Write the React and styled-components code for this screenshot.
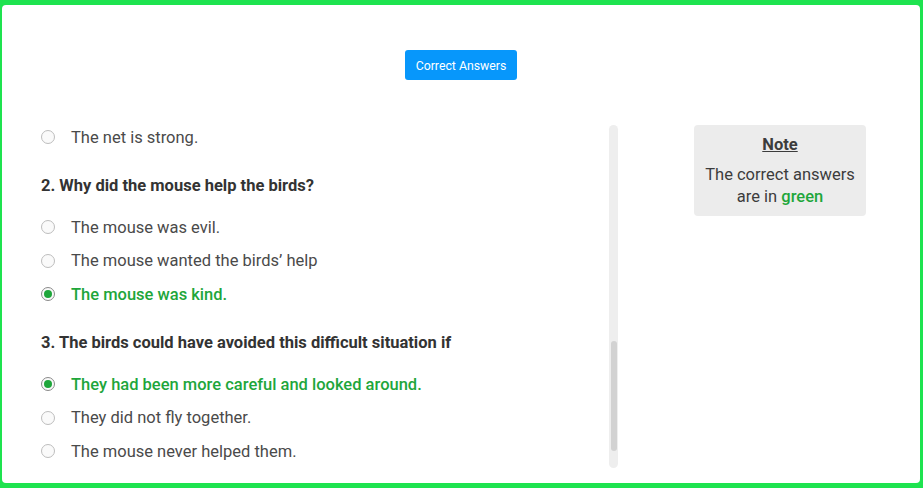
import React from "react";
import styled, { createGlobalStyle } from "styled-components";

const Global = createGlobalStyle`
  html, body { margin: 0; padding: 0; }
  body {
    background: #1ee34f;
    font-family: Roboto, "Liberation Sans", Arial, sans-serif;
  }
`;

const Frame = styled.div`
  width: 923px;
  height: 488px;
  box-sizing: border-box;
  padding: 5px 3px 5px 2px;
  background: #1ee34f;
`;

const Card = styled.div`
  height: 100%;
  background: #fff;
  border-radius: 4px;
  display: flex;
  flex-direction: column;
  align-items: stretch;
  box-sizing: border-box;
  padding-top: 45px;
  padding-bottom: 15px;
`;

const Toolbar = styled.div`
  display: flex;
  justify-content: center;
`;

const Button = styled.button`
  height: 30px;
  width: 112px;
  border: none;
  border-radius: 3px;
  background: #0797fb;
  color: #fff;
  font-family: Roboto, "Liberation Sans", Arial, sans-serif;
  font-size: 12.3px;
  padding: 1px 0 0;
  cursor: pointer;
`;

const Main = styled.div`
  margin-top: 45px;
  flex: 1;
  display: flex;
  padding: 0 54px 0 39px;
  min-height: 0;
`;

const LeftPane = styled.div`
  width: 577px;
  display: flex;
  height: 100%;
`;

const List = styled.div`
  flex: 1;
  overflow: hidden;
`;

const ListInner = styled.div`
  margin-top: -4.75px;
`;

const Track = styled.div`
  width: 9px;
  height: 100%;
  background: #eeeeee;
  border-radius: 5px;
  display: flex;
  flex-direction: column;
  align-items: center;
  padding-top: 216px;
  box-sizing: border-box;
`;

const Thumb = styled.div`
  width: 6px;
  height: 110px;
  border-radius: 3px;
  background: #d2d2d2;
`;

const Question = styled.div`
  font-size: 16.5px;
  font-weight: 700;
  line-height: 20px;
  color: #333;
  margin: 22.25px 0 14.25px;
`;

const Option = styled.div`
  display: flex;
  align-items: center;
  height: 33.5px;
  font-size: 16.5px;
  color: ${(p) => (p.$correct ? "#1ea63b" : "#4a4a4a")};
  font-weight: ${(p) => (p.$correct ? 500 : 400)};
`;

const Radio = styled.span`
  width: 14px;
  height: 14px;
  box-sizing: border-box;
  border-radius: 50%;
  border: 1px solid ${(p) => (p.$checked ? "#8a8a8a" : "#bdbdbd")};
  background: #fafafa;
  display: flex;
  align-items: center;
  justify-content: center;
  margin-right: 16px;
  flex-shrink: 0;
  &::after {
    content: "";
    width: 8px;
    height: 8px;
    border-radius: 50%;
    background: #1ea63b;
    display: ${(p) => (p.$checked ? "block" : "none")};
  }
`;

const Side = styled.div`
  margin-left: auto;
  width: 172px;
`;

const Note = styled.div`
  background: #ececec;
  border-radius: 4px;
  text-align: center;
  padding: 9px 4px 8px;
  color: #3c3c3c;
  font-size: 16.5px;
  line-height: 22px;
`;

const NoteTitle = styled.div`
  font-weight: 700;
  text-decoration: underline;
  margin-bottom: 8px;
`;

const Green = styled.span`
  color: #1ea63b;
  font-weight: 500;
`;

const questions = [
  {
    title: null,
    options: [{ text: "The net is strong." }],
  },
  {
    title: "2. Why did the mouse help the birds?",
    options: [
      { text: "The mouse was evil." },
      { text: "The mouse wanted the birds’ help" },
      { text: "The mouse was kind.", correct: true },
    ],
  },
  {
    title: "3. The birds could have avoided this difficult situation if",
    options: [
      { text: "They had been more careful and looked around.", correct: true },
      { text: "They did not fly together." },
      { text: "The mouse never helped them." },
    ],
  },
];

export default function App() {
  return (
    <>
      <Global />
      <Frame>
        <Card>
          <Toolbar>
            <Button>Correct Answers</Button>
          </Toolbar>
          <Main>
            <LeftPane>
              <List>
                <ListInner>
                  {questions.map((q, i) => (
                    <div key={i}>
                      {q.title && <Question>{q.title}</Question>}
                      {q.options.map((o, j) => (
                        <Option key={j} $correct={o.correct}>
                          <Radio $checked={o.correct} />
                          {o.text}
                        </Option>
                      ))}
                    </div>
                  ))}
                </ListInner>
              </List>
              <Track>
                <Thumb />
              </Track>
            </LeftPane>
            <Side>
              <Note>
                <NoteTitle>Note</NoteTitle>
                The correct answers
                <br />
                are in <Green>green</Green>
              </Note>
            </Side>
          </Main>
        </Card>
      </Frame>
    </>
  );
}
